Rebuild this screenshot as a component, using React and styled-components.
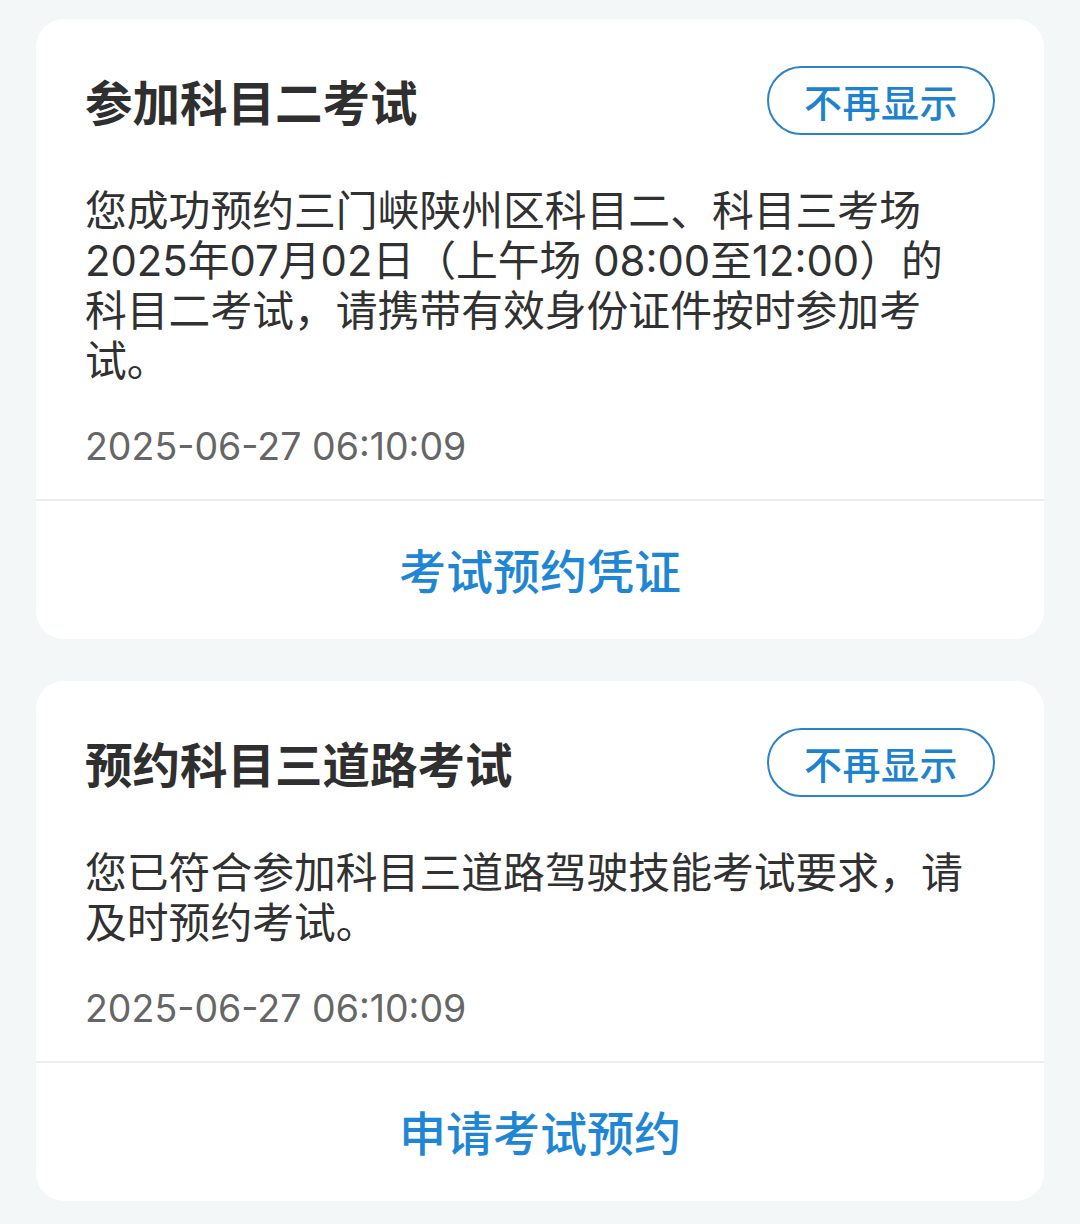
import React from "react";
import styled, { createGlobalStyle } from "styled-components";

const Global = createGlobalStyle`
  html, body { margin: 0; padding: 0; background: #f4f7f8; }
  body {
    font-family: "Noto Sans CJK SC", "Noto Sans", sans-serif;
  }
  * { box-sizing: border-box; }
`;

const Page = styled.div`
  min-height: 1224px;
  padding: 19px 36px 24px;
  display: flex;
  flex-direction: column;
  gap: 42px;
`;

const Card = styled.div`
  background: #ffffff;
  border-radius: 28px;
  overflow: hidden;
`;

const Content = styled.div`
  padding: 47px 49px 27px 49px;
`;

const Header = styled.div`
  display: flex;
  align-items: center;
  justify-content: space-between;
  height: 69px;
`;

const Title = styled.h2`
  margin: 0;
  font-size: 47.5px;
  font-weight: 700;
  color: #2f2f2f;
  line-height: 1;
`;

const HideButton = styled.button`
  width: 228px;
  height: 69px;
  border: 2.5px solid #2c82c6;
  border-radius: 35px;
  background: #fff;
  color: #1e83cf;
  font-family: inherit;
  font-size: 38px;
  font-weight: 500;
  padding: 0;
  display: flex;
  align-items: center;
  justify-content: center;
  letter-spacing: 0.5px;
`;

const Body = styled.p`
  margin: 51px 0 0;
  padding-right: 20px;
  font-family: "Inter", "Noto Sans CJK SC", sans-serif;
  font-size: 41.8px;
  line-height: 50px;
  color: #313131;
`;

const Time = styled.div`
  margin-top: 36px;
  font-family: "Inter", "Noto Sans CJK SC", sans-serif;
  font-size: 37.5px;
  line-height: 50px;
  color: #666666;
`;

const Divider = styled.div`
  height: 2px;
  background: #ededed;
`;

const Action = styled.div`
  height: 138px;
  padding-bottom: 4px;
  display: flex;
  align-items: center;
  justify-content: center;
  font-size: 47px;
  font-weight: 500;
  color: #1f86d6;
`;

const items = [
  {
    title: "参加科目二考试",
    body: "您成功预约三门峡陕州区科目二、科目三考场2025年07月02日（上午场 08:00至12:00）的科目二考试，请携带有效身份证件按时参加考试。",
    time: "2025-06-27 06:10:09",
    action: "考试预约凭证",
  },
  {
    title: "预约科目三道路考试",
    body: "您已符合参加科目三道路驾驶技能考试要求，请及时预约考试。",
    time: "2025-06-27 06:10:09",
    action: "申请考试预约",
  },
];

export default function App() {
  return (
    <>
      <Global />
      <Page>
        {items.map((it) => (
          <Card key={it.title}>
            <Content>
              <Header>
                <Title>{it.title}</Title>
                <HideButton>不再显示</HideButton>
              </Header>
              <Body>{it.body}</Body>
              <Time>{it.time}</Time>
            </Content>
            <Divider />
            <Action>{it.action}</Action>
          </Card>
        ))}
      </Page>
    </>
  );
}
